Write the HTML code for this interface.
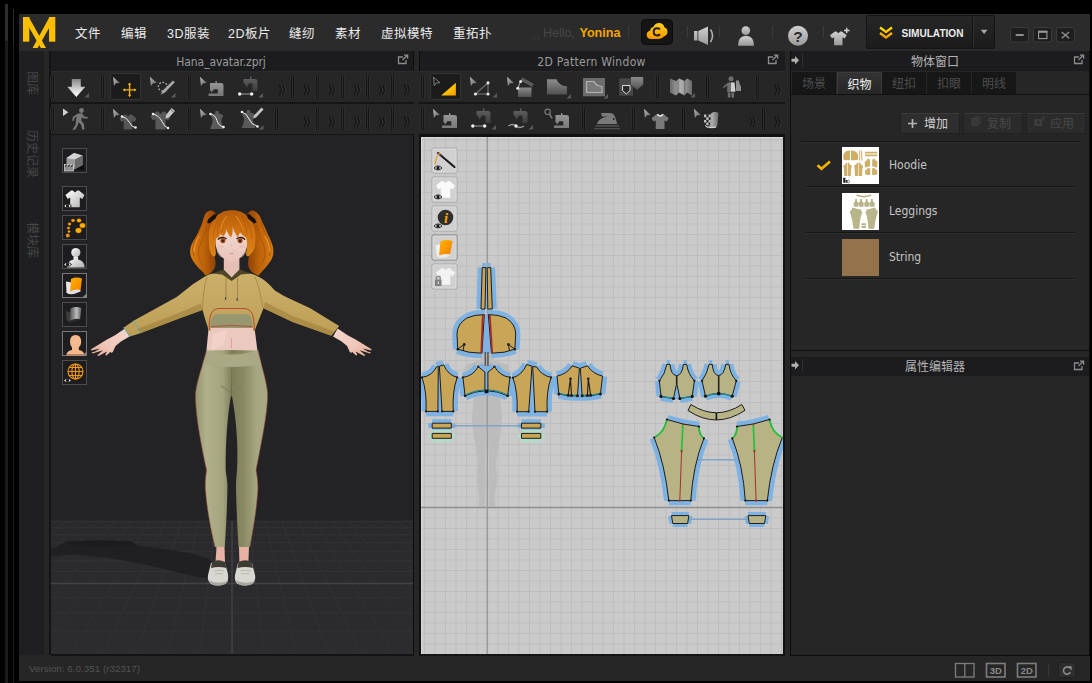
<!DOCTYPE html>
<html lang="zh">
<head>
<meta charset="utf-8">
<title>Marvelous Designer</title>
<style>
*{box-sizing:border-box;margin:0;padding:0}
html,body{width:1092px;height:683px;overflow:hidden;background:#000}
body{position:relative;font-family:"Liberation Sans","Noto Sans CJK SC",sans-serif;color:#ddd;font-size:12px}
.abs{position:absolute}
#app{position:absolute;left:19px;top:14px;width:1071px;height:667px;background:#262626}
/* outside strips */
.strip{position:absolute;background:#222}
/* menubar */
#menubar{position:absolute;left:19px;top:14px;width:1071px;height:37px;background:#2b2b2b}
.menu{position:absolute;top:24.500px;height:18px;line-height:18px;font-size:12.500px;color:#ececec;white-space:nowrap;letter-spacing:.5px}
/* titles */
.title{position:absolute;background:#1c1c1e;color:#9a9a9a;font-size:12px;text-align:center;white-space:nowrap;font-family:"DejaVu Sans Condensed","DejaVu Sans","Noto Sans CJK SC",sans-serif}
.toolrow{position:absolute;background:#262626}
.hline{position:absolute;background:#151515;height:1px}
.vline{position:absolute;background:#151515;width:1px}
.sep{position:absolute;width:3px;height:23px;border-left:1px solid #161616;border-right:1px solid #161616}
.chev{position:absolute;color:#3a3a3a;font-size:15px;line-height:16px;width:12px;text-align:center;font-family:"DejaVu Sans",sans-serif}
#sidebar{position:absolute;left:19px;top:51px;width:25px;height:604px;background:#1f1f21}
.vtext{position:absolute;left:42px;height:20px;transform-origin:0 0;transform:rotate(90deg);font-size:12px;color:#464648;white-space:nowrap;line-height:20px}
#view3d{position:absolute;left:51px;top:135px;width:362px;height:519px;background:#232325;overflow:hidden}
#view2d{position:absolute;left:421px;top:137px;width:362px;height:517px;background:#cbcbcb;overflow:hidden}
#status{position:absolute;left:19px;top:656px;width:1071px;height:25px;background:#262626}
.vbtn{position:absolute;width:24px;height:24px;border:1px solid #555;background:#1d1d1f}
.vbtn2{position:absolute;width:26px;height:26px;border:1px solid #8a8a8a;background:#dcdcdc}
.tab{position:absolute;top:72px;width:45px;height:22px;line-height:24px;text-align:center;font-size:12px;color:#4e4e4e;background:#171717;border-right:1px solid #262626}
.tab.on{color:#f0f0f0;background:linear-gradient(#333,#262626);border:1px solid #3c3c3c;border-bottom:none}
.pbtn{position:absolute;top:113px;height:21px;background:#2e2e2e;border:1px solid #202020;border-top-color:#3a3a3a;font-size:12px;line-height:21px;color:#d0d0d0;white-space:nowrap}
.pbtn.dis{color:#484848;background:#2b2b2b}
.rowsep{position:absolute;left:806px;width:270px;height:2px;background:linear-gradient(#151515 50%,#303030 50%)}
.thumb{position:absolute;left:842px;width:37px;height:37px;background:#fff;overflow:hidden}
.rname{position:absolute;left:889px;font-size:12px;color:#c4c4c4;font-family:"DejaVu Sans Condensed","DejaVu Sans",sans-serif;line-height:16px}
</style>
</head>
<body>
<!-- outer faint strips on the black desktop -->
<div class="strip" style="left:5px;top:4px;width:3px;height:679px;background:#1b1b1b"></div>
<div class="strip" style="left:5px;top:4px;width:3px;height:37px;background:#2c2c2c"></div>
<div class="strip" style="left:13px;top:9px;width:1px;height:674px;background:#1e1e1e"></div>
<div class="strip" style="left:13px;top:9px;width:1px;height:36px;background:#2c2c2c"></div>

<div id="app"></div>
<div id="menubar"></div>

<!-- LOGO -->
<svg class="abs" style="left:19px;top:14px" width="44" height="37" viewBox="0 0 44 37">
  <g fill="#fbbf00"><rect x="4" y="3" width="6.300" height="24.700"/><rect x="30" y="3" width="6.300" height="24.700"/><polygon points="4,3 9.800,3 27,34 21.900,34"/><polygon points="36.300,3 30.500,3 13.600,34 18.700,34"/></g>
</svg>

<!-- MENUS -->
<div class="menu" style="left:75px">文件</div>
<div class="menu" style="left:121px">编辑</div>
<div class="menu" style="left:167px">3D服装</div>
<div class="menu" style="left:228px">2D板片</div>
<div class="menu" style="left:289px">缝纫</div>
<div class="menu" style="left:335px">素材</div>
<div class="menu" style="left:381px">虚拟模特</div>
<div class="menu" style="left:453px">重拓扑</div>

<div class="abs" style="left:543px;top:25px;height:16px;line-height:16px;font-size:12.500px;color:#474747;white-space:nowrap">Hello, <b style="color:#f5a500;font-size:12.600px;margin-left:1px">Yonina</b></div>

<!-- SIDEBAR -->
<div id="sidebar"></div>
<div class="abs" style="left:44px;top:51px;width:5px;height:604px;background:#262626"></div>
<div class="abs" style="left:49px;top:51px;width:2px;height:604px;background:#141414"></div>
<div class="vtext" style="top:71px">图库</div>
<div class="vtext" style="top:130px">历史记录</div>
<div class="vtext" style="top:221.500px">模块库</div>

<!-- 3D WINDOW -->
<div class="title" style="left:51px;top:51px;width:362px;height:20px;line-height:22px"><span style="position:relative;left:-11px;letter-spacing:-.08px">Hana_avatar.zprj</span></div>
<div class="toolrow" id="t3a" style="left:51px;top:72px;width:363px;height:30px"></div>
<div class="toolrow" id="t3b" style="left:51px;top:104px;width:363px;height:30px"></div>
<div class="hline" style="left:51px;top:71px;width:363px;background:#2c2c2c"></div>
<div class="hline" style="left:51px;top:102px;width:363px;height:2px"></div>
<div class="hline" style="left:51px;top:134px;width:363px"></div>
<div id="view3d">
<svg class="abs" style="left:0;top:0" width="363" height="520" viewBox="51 135 363 520">
<defs>
  <linearGradient id="flr" x1="0" y1="0" x2="0" y2="1"><stop offset="0" stop-color="#29292c"/><stop offset="0.3" stop-color="#2b2b2e"/><stop offset="1" stop-color="#2c2c2f"/></linearGradient>
  <linearGradient id="hairg" x1="0" y1="0" x2="0" y2="1"><stop offset="0" stop-color="#b85c0a"/><stop offset="0.5" stop-color="#d07412"/><stop offset="1" stop-color="#dc8418"/></linearGradient>
  <linearGradient id="tailL" x1="0" y1="0" x2="1" y2="0"><stop offset="0" stop-color="#d87c12"/><stop offset="0.55" stop-color="#bc620a"/><stop offset="1" stop-color="#8e4206"/></linearGradient>
  <linearGradient id="tailR" x1="1" y1="0" x2="0" y2="0"><stop offset="0" stop-color="#d87c12"/><stop offset="0.55" stop-color="#bc620a"/><stop offset="1" stop-color="#8e4206"/></linearGradient>
  <linearGradient id="hood" x1="0" y1="0" x2="0" y2="1"><stop offset="0" stop-color="#ccb06a"/><stop offset="1" stop-color="#bd9e56"/></linearGradient>
  <linearGradient id="legL" x1="0" y1="0" x2="1" y2="0"><stop offset="0" stop-color="#96976f"/><stop offset="0.3" stop-color="#b0b18b"/><stop offset="0.75" stop-color="#a3a47e"/><stop offset="1" stop-color="#7e7e5a"/></linearGradient>
  <linearGradient id="legR" x1="0" y1="0" x2="1" y2="0"><stop offset="0" stop-color="#7c7c59"/><stop offset="0.35" stop-color="#8a8a64"/><stop offset="0.7" stop-color="#a6a781"/><stop offset="1" stop-color="#a9aa84"/></linearGradient>
  <linearGradient id="skin" x1="0" y1="0" x2="0" y2="1"><stop offset="0" stop-color="#f3dcd6"/><stop offset="1" stop-color="#e9c3b8"/></linearGradient>
  <radialGradient id="shad" cx="0.5" cy="0.5" r="0.5"><stop offset="0" stop-color="#19191b"/><stop offset="0.7" stop-color="#1b1b1d" stop-opacity=".95"/><stop offset="1" stop-color="#1e1e20" stop-opacity="0"/></radialGradient>
</defs>
<!-- floor -->
<rect x="51" y="520.500" width="363" height="135" fill="url(#flr)"/>
<path d="M51 521.4H414M51 527.9H414M51 534.9H414M51 542.7H414M51 551.3H414M51 560.9H414M51 571.6H414M51 597.4H414M51 613.0H414M51 631.1H414M51 652.2H414" stroke="#333336" stroke-width="1" fill="none"/>
<path d="M65.9 521.0L51.0 533.7M82.5 521.0L51.0 550.7M99.1 521.0L51.0 572.1M115.7 521.0L51.0 599.5M132.3 521.0L51.0 636.1M149.0 521.0L70.0 655.0M165.6 521.0L102.4 655.0M182.2 521.0L134.8 655.0M198.8 521.0L167.2 655.0M215.4 521.0L199.6 655.0M248.6 521.0L264.4 655.0M265.2 521.0L296.8 655.0M281.8 521.0L329.2 655.0M298.4 521.0L361.6 655.0M315.0 521.0L394.0 655.0M331.7 521.0L414.0 637.5M348.3 521.0L414.0 600.7M364.9 521.0L414.0 573.1M381.5 521.0L414.0 551.7M398.1 521.0L414.0 534.5" stroke="#323235" stroke-width="1" fill="none"/>
<path d="M51 583.500H414" stroke="#434346" stroke-width="1.300"/>
<path d="M232 521V655" stroke="#4a4a4d" stroke-width="1.100"/>
<!-- shadow -->
<path d="M51 549L58 546L66 541.500L100 540.500L132 541.500L137 545.500L160 548.500L190 553L207 558L214 563L214 579L200 577.500L172 571L145 564.500L110 558L75 554.500L51 556.500Z" fill="#202023"/>
<path d="M66 541.500L100 540.500L132 541.500L137 545.500L100 546L70 545.500Z" fill="#1c1c1f"/>
<!-- pigtails -->
<path d="M210.600 210.500C207 211 205 213.500 204.400 216C203 220 202 224 200.800 227C199 231 197 235 195.200 238C192.500 242 190.500 246 190.300 249.200C190 252 190.200 254.500 190.900 256.600C192 259.500 193.500 262 195.200 264C197 266.500 199.500 269 202 271.300L205.700 275.600C208.500 274.500 211 273 212.400 271.300C214.500 269 215.500 266.500 215.500 264C215.600 262 215.300 260 214.900 257.800L216 230L216 214C214.500 211.500 212.500 210.300 210.600 210.500Z" fill="url(#tailL)"/>
<path d="M252.400 210.500C256 211 258 213.500 259.800 216C261.500 220 263 224 264.700 227C266.500 231 268 235 269.600 238C271.500 242 273 246 273.300 249.200C273.500 252 273.300 254.500 272.700 256.600C271.800 259.500 270.200 262 268.400 264C266.500 266.500 264.500 269 262.300 271.300L258.600 275.600C255.500 274.500 253 273 251.200 271.300C249 269 248.200 266.500 248.100 264C248 262 248.300 260 248.700 257.800L247.500 230L247.500 214C249 211.500 250.500 210.300 252.400 210.500Z" fill="url(#tailR)"/>
<path d="M203 222q-5 12-9 20q-3 8 0 14M207 226q-4 12-8 22q-2 8 3 17M211 250q-2 10 0 20" stroke="#9c4a06" stroke-width=".9" fill="none" opacity=".7"/>
<path d="M260.500 222q5 12 9 20q3 8 0 14M256.500 226q4 12 8 22q2 8-3 17M252.500 250q2 10 0 20" stroke="#9c4a06" stroke-width=".9" fill="none" opacity=".7"/>
<path d="M199 236q-5 9-5 16" stroke="#ee9a2a" stroke-width="1.400" fill="none" opacity=".8"/><path d="M265 236q5 9 5 16" stroke="#ee9a2a" stroke-width="1.400" fill="none" opacity=".8"/>
<!-- neck -->
<path d="M223.800 255h15.600v15l-7.800 8l-7.800-8z" fill="#e6bfb4"/>
<!-- face -->
<path d="M215.300 238C214.500 228 221 222 231.500 222C242 222 248.500 228 247.700 238C248 246 246 252 241 257C237 260.500 234 262 231.500 262.500C229 262 226 260.500 222 257C217 252 215 246 215.300 238Z" fill="url(#skin)"/>
<path d="M216 244q2 8 8 14q-4 0-7-6zM247 244q-2 8-8 14q4 0 7-6z" fill="#e8c5bc" opacity=".6"/>
<!-- eyes -->
<ellipse cx="222.900" cy="240.600" rx="2.500" ry="2.700" fill="#9a4a12"/><ellipse cx="240.100" cy="240.600" rx="2.500" ry="2.700" fill="#9a4a12"/>
<circle cx="222.900" cy="240.800" r="1.100" fill="#3a1806"/><circle cx="240.100" cy="240.800" r="1.100" fill="#3a1806"/>
<path d="M218 239.600q1-1.600 3.200-2.100q3-.6 5.300 1.500M245 239.600q-1-1.600-3.200-2.100q-3-.6-5.300 1.500" stroke="#2a1a14" stroke-width="1.400" fill="none"/>
<ellipse cx="221" cy="246.500" rx="3" ry="1.600" fill="#eeb4ac" opacity=".5"/><ellipse cx="242" cy="246.500" rx="3" ry="1.600" fill="#eeb4ac" opacity=".5"/>
<path d="M229.700 253.400q1.800.6 3.600 0" stroke="#c98a84" stroke-width=".9" fill="none"/>
<path d="M231.800 244l-.8 3.500" stroke="#e0b4aa" stroke-width=".8"/>
<!-- hair cap + bangs -->
<path d="M212.400 256C209.500 252 208.600 246 208.800 237C208.500 221 218 210.300 232 210.300C246 210.300 255.800 221 255.500 237C255.700 246 254.500 252 248.700 256C246.500 257 245.800 255 246.300 252C247.500 247 247.200 242 246.300 238L243.500 236L240 232.500L237.700 237.500Q234 232 232.500 226.500Q233.500 233 231 237.500Q227 233 226.500 229Q226 234 223.500 236.500L220.500 234L218.500 237.500L216.500 238C215.300 242 215 247 215.800 252C216.200 255 215 257.500 212.400 256Z" fill="url(#hairg)"/>
<path d="M232 211q-9 6-10 21M232 211q9 7 10 21M226 212q-8 8-9 24M238 212q9 8 9 24M221 215q-7 9-8 24M243 215q8 9 9 24" stroke="#b05408" stroke-width=".8" fill="none" opacity=".7"/>
<path d="M227 216q-5 6-6 14M236 216q5 6 7 15" stroke="#f0a030" stroke-width="1.200" fill="none" opacity=".55"/>
<!-- ribbons -->
<path d="M207 222.500L208.500 219L214.500 214L217 215L215.500 218.500L209.500 223.500Z" fill="#15100c"/><path d="M256.500 222.500L255 219L249 214L246.500 215L248 218.500L254 223.500Z" fill="#15100c"/>
<!-- midriff skin -->
<path d="M209 324h45l4 31h-52z" fill="#ecc9be"/>
<path d="M213 334l14-4l-4 16l-12 4z" fill="#f2d6cd" opacity=".7"/>
<path d="M231.500 338v10" stroke="#d7a497" stroke-width="1"/>
<!-- olive crop band -->
<path d="M210 312h43v16h-43z" fill="#979870"/>
<!-- leggings -->
<path d="M206.600 350.500C203 365 197 380 195.600 393C195 410 200 440 206.600 470C205.500 478 205 484 205.500 490C207 510 211 530 215 547L224.800 547C226 530 227.500 500 227.400 484.600C227 478 226 474 225.700 470C225.500 450 226.500 420 231.400 393L232 350Z" fill="url(#legL)"/>
<path d="M258 350.500C261 365 266.500 380 267.500 393C268 410 262 440 256 470C257.500 478 258 484 257.800 490C256.500 510 253 530 249.800 547L238.500 547C237.500 530 236 500 236 484.600C236.200 478 236.800 474 237 470C238 450 237.500 425 231.400 393L231 350Z" fill="url(#legR)"/>
<path d="M206.600 350.500Q219 354.500 232 354.500T258 350.500L261.500 364.500Q247 367 232 367T202.500 364.500Z" fill="#a9aa85"/>
<path d="M221 386q8 4 10.400 9q3-5 11-9" stroke="#7f8258" stroke-width="1.600" fill="none" opacity=".7"/>
<!-- ankles -->
<path d="M216.500 547h8l.5 15h-9.500z" fill="#e7b1a3"/><path d="M239 547h10l-.6 15h-9z" fill="#e7b1a3"/>
<!-- shoes -->
<path d="M211 563q5-3 14 0l3 11q1 8-3 10q-7 3-14 0q-4-3-3-9z" fill="#d9d7d1"/>
<path d="M238 563q8-3 14 0l3 12q1 6-3 9q-7 3-14 0q-4-2-3-9z" fill="#d9d7d1"/>
<path d="M212 562q6-3.500 13 0l1.500 6q-7.500-2-15.500 0z" fill="#3d3c32"/><path d="M238.500 562q7-3.500 13 0l1.500 6q-8-2-15.500 0z" fill="#3d3c32"/>
<path d="M214 571q5-1.500 10 0M215 574q4-1 8 0M240.500 571q5-1.500 10 0M241.500 574q4-1 8 0" stroke="#b4b2ab" stroke-width=".9" fill="none"/>
<path d="M208.500 580q8 5 19.500 1q-2 4-9.500 4.500t-10-5.500z" fill="#a9a7a0"/><path d="M235.500 580q8 5 19.500 1q-2 4-9.500 4.500t-10-5.500z" fill="#a9a7a0"/>
<!-- hands -->
<linearGradient id="handL" x1="1" y1="0" x2="0" y2="1"><stop offset="0" stop-color="#f3d6cc"/><stop offset="0.6" stop-color="#efc7ba"/><stop offset="1" stop-color="#e6a892"/></linearGradient>
<linearGradient id="handR" x1="0" y1="0" x2="1" y2="1"><stop offset="0" stop-color="#f3d6cc"/><stop offset="0.6" stop-color="#efc7ba"/><stop offset="1" stop-color="#e6a892"/></linearGradient>
<polygon points="125.0,328.5 115.0,335.2 107.0,339.5 98.0,345.0 91.0,349.2 91.4,350.6 100.0,348.6 95.0,351.5 91.6,352.6 92.6,353.6 103.0,350.2 97.2,355.3 98.6,356.0 107.0,351.6 105.2,355.0 106.6,355.6 110.5,351.8 111.4,353.0 112.8,352.0 115.5,346.0 121.0,341.5 129.5,336.5" fill="url(#handL)"/>
<polygon points="337.6,328.5 347.6,335.2 355.6,339.5 364.6,345.0 371.6,349.2 371.2,350.6 362.6,348.6 367.6,351.5 371.0,352.6 370.0,353.6 359.6,350.2 365.4,355.3 364.0,356.0 355.6,351.6 357.4,355.0 356.0,355.6 352.1,351.8 351.2,353.0 349.8,352.0 347.1,346.0 341.6,341.5 333.1,336.5" fill="url(#handR)"/>
<!-- hoodie -->
<path d="M222 272.500L213 273.500Q209 274 205 276.500L192.800 284.200L176.700 297L134 320.400L123.500 327.700L130 336.500L140.400 333.300L176.700 319.600L202.500 310L206 322L209 331L210.700 331Q210.200 320 213 316Q214.500 314 218 314L245 314Q248.500 314 250.300 316Q253 320 252.800 331L254.600 331L258 322L263.500 308.300L292.500 322L331.200 335.700L339.200 326L310.200 308.300L284.500 296.300L274.800 290.600Q266 280 258 276.500Q254 274 250 273.500L241 272.500L231.500 280Z" fill="url(#hood)"/>
<!-- hood collar -->
<path d="M212.500 273.500L223.500 269.500L231.600 277.500L239.500 269.500L250.500 273.500L241 274.500L231.600 281L222 274.500Z" fill="#4e4626"/>
<!-- hoodie shading -->
<path d="M202.500 310L176.700 319.600L140.400 333.300L137 329L176 314L201 303.500Z" fill="#9a7b39" opacity=".55"/>
<path d="M263.500 308.300L292.500 322L331.200 335.700L334 331.500L293 316L265 302Z" fill="#9a7b39" opacity=".55"/>
<path d="M207 277q-4 12-4.500 33M255 277q5 12 8 31" stroke="#a3843f" stroke-width="1" fill="none" opacity=".8"/>
<!-- red seam lines -->
<path d="M209.300 330Q208.800 316 212.500 311.500Q214.500 308.500 219 308.500L244 308.500Q248.500 308.500 250.800 311.500Q254.500 316 254.300 330" fill="none" stroke="#b2402e" stroke-width=".9"/>
<path d="M211 326.500q20-2 41 0" fill="none" stroke="#b2402e" stroke-width=".8"/>
<path d="M226 278v19M237.500 278v20" stroke="#8d7440" stroke-width=".7"/>
<path d="M225.600 297v3M237.200 298v3" stroke="#4a4a48" stroke-width="1.200"/>
<path d="M123.500 327.500l6.500 9M134 320.500l6.500 12.500" stroke="#47b4c8" stroke-width=".8" fill="none"/>
<path d="M206.600 350.500C203 365 197 380 195.600 393C195 410 200 440 206.600 470C205.500 478 205 484 205.500 490C207 510 211 530 215 547M258 350.500C261 365 266.500 380 267.500 393C268 410 262 440 256 470C257.500 478 258 484 257.800 490C256.500 510 253 530 249.800 547" stroke="#a5503e" stroke-width=".7" fill="none" opacity=".8"/>
</svg>
</div>

<!-- gap between windows -->
<div class="abs" style="left:413px;top:51px;width:1px;height:20px;background:#0e0e0e"></div>
<div class="abs" style="left:413px;top:134px;width:1px;height:522px;background:#0e0e0e"></div>
<div class="abs" style="left:51px;top:654px;width:363px;height:2px;background:#141414"></div>
<div class="abs" style="left:414px;top:51px;width:5px;height:605px;background:#262626"></div>
<div class="abs" style="left:419px;top:51px;width:1px;height:20px;background:#0e0e0e"></div>
<div class="abs" style="left:419px;top:134px;width:2px;height:522px;background:#111"></div>
<div class="abs" style="left:419px;top:654px;width:366px;height:2px;background:#141414"></div>
<div class="abs" style="left:783px;top:134px;width:2px;height:522px;background:#111"></div>

<!-- 2D WINDOW -->
<div class="title" style="left:420px;top:51px;width:365px;height:20px;line-height:22px"><span style="position:relative;left:-11px;letter-spacing:.3px">2D Pattern Window</span></div>
<div class="toolrow" id="t2a" style="left:419px;top:72px;width:366px;height:30px"></div>
<div class="toolrow" id="t2b" style="left:419px;top:104px;width:366px;height:30px"></div>
<div class="hline" style="left:420px;top:71px;width:365px;background:#2c2c2c"></div>
<div class="hline" style="left:419px;top:102px;width:366px;height:2px"></div>
<div class="hline" style="left:419px;top:134px;width:366px;height:3px;background:#111"></div>
<div id="view2d">
<svg class="abs" style="left:0;top:0" width="363" height="518" viewBox="421 137 363 518">
<defs>
  <pattern id="grid" x="487" y="507" width="10.5" height="10.5" patternUnits="userSpaceOnUse"><path d="M0.5 0V10.5M0 0.500H10.500" stroke="#bebebe" stroke-width="1" fill="none"/></pattern>
</defs>
<rect x="421" y="137" width="363" height="518" fill="#cacaca"/>
<rect x="421" y="137" width="363" height="518" fill="url(#grid)"/>
<path d="M421 137.500H784M421.500 137V655" stroke="#dadada" stroke-width="1"/>
<!-- avatar silhouette -->
<g fill="#bcbcbc">
  <path d="M481 352h12l1 8l14 5l3 10l-8 2l-3 18l2 21.500C501.500 430 499 442 498 450C497 456 496 461 496 466C496.500 471 497 476 497 480C496.500 487 495 493 494.500 498L495.500 506.500H489L489 498C488.800 492 488.500 486 488.500 480C488.700 475 489 470 489 466C488.800 452 488.400 440 488 428H486C485.600 440 485.200 452 485 466C485 470 485.300 475 485.500 480C485.500 486 485.200 492 485 498L485 506.500H478.500L479.500 498C479 493 477.500 487 477 480C477 476 477.500 471 478 466C478 461 477 456 476 450C475 442 472.500 430 472 416.500L474 395l-3-18l-8-2l3-10l14-5z"/>
</g>
<path d="M421 507.500H784" stroke="#8e8e8e" stroke-width="1.300"/>
<path d="M487.300 137V655" stroke="#9a9a9a" stroke-width="1.500"/>
<!-- halos -->
<g fill="#7db2e2" stroke="#7db2e2" stroke-width="9.5" stroke-linejoin="bevel" stroke-linecap="butt">
  <path d="M482.200 267.600h3.700l-.9 41.400h-4zM487.200 267.600h3.500l1.600 41.400h-4.500z" stroke="none"/>
  <path d="M482.2 267.6L485.9 267.6M485.9 267.6L485 309M485 309L481 309M481 309L482.2 267.6M487.2 267.6L490.7 267.6M490.7 267.6L492.3 309M492.3 309L487.8 309M487.8 309L487.2 267.6" fill="none" stroke-width="9"/>
  <path d="M484.300 314.600Q474 314.600 467 318Q457 324 457 334L457.700 349.200Q468 353.200 481.900 353.200ZM488.300 314.600Q499 314.600 506 318Q515.700 324 515.700 334L514.900 349.200Q505 353.200 491.500 353.200Z" stroke="none"/>
  <path d="M484.3 314.6Q474 314.6 467 318M467 318Q457 324 457 334M457 334L457.7 349.2M457.7 349.2Q468 353.2 481.9 353.2M481.9 353.2L484.3 314.6M488.3 314.6Q499 314.6 506 318M506 318Q515.7 324 515.7 334M515.7 334L514.9 349.2M514.9 349.2Q505 353.2 491.5 353.2M491.5 353.2L488.3 314.6" fill="none"/>
  <path d="M422 377.400Q432 376 436.800 366.600L443.700 364.900Q448 375 457.200 377.400Q452 392 453.300 411.400L426 411.400Q427 392 422 377.400Z" stroke="none"/>
  <path d="M422 377.4Q432 376 436.8 366.6M436.8 366.6L443.7 364.9M443.7 364.9Q448 375 457.2 377.4M457.2 377.4Q452 392 453.3 411.4M453.3 411.4L426 411.4M426 411.4Q427 392 422 377.4" fill="none"/>
  <path d="M462.900 377.400Q473 376 478.300 366.600Q482 370 484.900 372.100L487.900 372.100Q491 370 494.500 366.600Q500 376 509.900 377.400L507.700 395.800Q498 391 486.500 390.800Q475 391 465.100 395.800Z" stroke="none"/>
  <path d="M462.9 377.4Q473 376 478.3 366.6M478.3 366.6Q482 370 484.9 372.1M484.9 372.1L487.9 372.1M487.9 372.1Q491 370 494.5 366.6M494.5 366.6Q500 376 509.9 377.4M509.9 377.4L507.7 395.8M507.7 395.8Q498 391 486.5 390.8M486.5 390.8Q475 391 465.1 395.8M465.1 395.8L462.9 377.4" fill="none"/>
  <path d="M512.900 377.700Q522 375 526.700 364.500L536.600 366.900Q541 375 551.100 377.400Q546 392 547.200 411.700L517.100 411.700Q518 392 512.900 377.700Z" stroke="none"/>
  <path d="M512.9 377.7Q522 375 526.7 364.5M526.7 364.5L536.6 366.9M536.6 366.9Q541 375 551.1 377.4M551.1 377.4Q546 392 547.2 411.7M547.2 411.7L517.1 411.7M517.1 411.7Q518 392 512.9 377.7" fill="none"/>
  <path d="M557 376.100Q567 374 572.200 365.800L579.900 368.200L587.300 365.800Q593 374 602.500 376.100L600.500 393.900Q590 396.500 579.800 395.800Q569 396.500 558.800 393.900Z" stroke="none"/>
  <path d="M557 376.1Q567 374 572.2 365.8M572.2 365.8L579.9 368.2M579.9 368.2L587.3 365.8M587.3 365.8Q593 374 602.5 376.1M602.5 376.1L600.5 393.9M600.5 393.9Q590 396.5 579.8 395.8M579.8 395.8Q569 396.5 558.8 393.9M558.8 393.9L557 376.1" fill="none"/>
  <path d="M432.200 423.200h19.100v4.900h-19.100zM521.500 423.200h19.300v4.900h-19.300z" stroke="none"/>
  <path d="M432.2 423.2L451.3 423.2M451.3 423.2L451.3 428.1M451.3 428.1L432.2 428.1M432.2 428.1L432.2 423.2M521.5 423.2L540.8 423.2M540.8 423.2L540.8 428.1M540.8 428.1L521.5 428.1M521.5 428.1L521.5 423.2" fill="none" stroke-width="8"/>
  <path d="M432.200 433.400h19.100v4.900h-19.100zM521.500 433.400h19.300v4.900h-19.300z" stroke="none" fill="#b2dcc8"/>
  <path d="M432.2 433.4L451.3 433.4M451.3 433.4L451.3 438.3M451.3 438.3L432.2 438.3M432.2 438.3L432.2 433.4M521.5 433.4L540.8 433.4M540.8 433.4L540.8 438.3M540.8 438.3L521.5 438.3M521.5 438.3L521.5 433.4" fill="none" stroke-width="8" stroke="#b2dcc8"/>
  <!-- crop tops -->
  <path d="M666.800 364.400h3.200Q671 375 676.700 375.600Q682 375 683.500 364.400h3.200Q688 374 694.400 380.800L692.200 396.400L679.900 398.500L676.700 385L673.500 398.500L661 396.400L659.400 380.800Q665 374 666.800 364.400Z" stroke="none"/>
  <path d="M666.8 364.4L670 364.4M670 364.4Q671 375 676.7 375.6M676.7 375.6Q682 375 683.5 364.4M683.5 364.4L686.7 364.4M686.7 364.4Q688 374 694.4 380.8M694.4 380.8L692.2 396.4M692.2 396.4L679.9 398.5M679.9 398.5L676.7 385M676.7 385L673.5 398.5M673.5 398.5L661 396.4M661 396.4L659.4 380.8M659.4 380.8Q665 374 666.8 364.4" fill="none" stroke-width="9"/>
  <path d="M709.100 364.400h3.200Q713 375 718.700 375.600Q724 375 725.800 364.400h3.200Q730 374 736.300 380.800L732.200 396.200Q725 393.500 718.700 393.600Q712 393.500 705.500 396.200L702 380.800Q707 374 709.100 364.400Z" stroke="none"/>
  <path d="M709.1 364.4L712.3 364.4M712.3 364.4Q713 375 718.7 375.6M718.7 375.6Q724 375 725.8 364.4M725.8 364.4L729 364.4M729 364.4Q730 374 736.3 380.8M736.3 380.8L732.2 396.2M732.2 396.2Q725 393.5 718.7 393.6M718.7 393.6Q712 393.5 705.5 396.2M705.5 396.2L702 380.8M702 380.8Q707 374 709.1 364.4" fill="none" stroke-width="9"/>
  <!-- legs -->
  <path d="M667 419.500Q683 425 699 426.500Q699 435 703.900 438.400Q693 465 690.800 500.600L668.800 500.600Q665 465 654.200 437.500Q664 433 667 419.500Z" stroke="none"/>
  <path d="M667 419.5Q683 425 699 426.5M703.9 438.4Q693 465 690.8 500.6M690.8 500.6L668.8 500.6M668.8 500.6Q665 465 654.2 437.5" fill="none"/>
  <path d="M769.500 419.500Q753 425 737 426.500Q737 435 732.300 438.400Q743 465 745.300 500.600L767.300 500.600Q771 465 782.300 437.500Q772 433 769.500 419.500Z" stroke="none"/>
  <path d="M769.5 419.5Q753 425 737 426.5M732.3 438.4Q743 465 745.3 500.6M745.3 500.6L767.3 500.6M767.3 500.6Q771 465 782.3 437.5" fill="none"/>
  <path d="M671.500 515.600h17.400l-1.300 7.900h-14.800zM748 515.600h17.800l-1.300 7.900h-15.200z" stroke="none"/>
  <path d="M671.5 515.6L688.9 515.6M688.9 515.6L687.6 523.5M687.6 523.5L672.8 523.5M672.8 523.5L671.5 515.6M748 515.6L765.8 515.6M765.8 515.6L764.5 523.5M764.5 523.5L749.3 523.5M749.3 523.5L748 515.6" fill="none" stroke-width="7"/>
</g>
<!-- connector lines -->
<path d="M451 425.800H521.500M697 459.800H737M689 519.300H748" stroke="#7aa2c8" stroke-width="1.400" opacity=".9"/>
<path d="M485.200 352v14M488 352v14" stroke="#4a4a4a" stroke-width="1.300"/>
<!-- mustard pieces -->
<g fill="#c9a558" stroke="#1d1d1d" stroke-width="1" stroke-linejoin="round">
  <path d="M482.200 267.600h3.700l-.9 41.400h-4zM487.200 267.600h3.500l1.600 41.400h-4.500z"/>
  <path d="M484.300 314.600Q474 314.600 467 318Q457 324 457 334L457.700 349.200Q468 353.200 481.900 353.200ZM488.300 314.600Q499 314.600 506 318Q515.700 324 515.700 334L514.900 349.200Q505 353.200 491.500 353.200Z"/>
  <path d="M422 377.400Q432 376 436.800 366.600L438.300 366.400L437.900 411.400L426 411.400Q427 392 422 377.400ZM439.400 366.200L443.700 364.900Q448 375 457.200 377.400Q452 392 453.300 411.400L442 411.400Z"/>
  <path d="M462.900 377.400Q473 376 478.300 366.600Q482 370 484.900 372.100L484.900 390.800Q475 391 465.100 395.800ZM509.900 377.400Q500 376 494.500 366.600Q491 370 487.900 372.100L487.900 390.800Q498 391 507.700 395.800Z"/>
  <path d="M512.900 377.700Q522 375 526.700 364.500L532 366.200L528.700 411.700L517.100 411.700Q518 392 512.900 377.700ZM532.700 366.600L536.600 366.900Q541 375 551.100 377.400Q546 392 547.200 411.700L535 411.700Z"/>
  <path d="M557 376.100Q567 374 572.200 365.800L579.400 368.200L577.500 395.800Q568 396.500 558.800 393.900ZM602.500 376.100Q593 374 587.300 365.800L580.400 368.200L582.100 395.800Q591 396.500 600.500 393.900Z"/>
  <path d="M432.200 423.200h19.100v4.900h-19.100zM521.500 423.200h19.300v4.900h-19.300zM432.200 433.400h19.100v4.900h-19.100zM521.500 433.400h19.300v4.900h-19.300z"/>
</g>
<!-- details on mustard -->
<path d="M482.800 315L481.300 353M489.800 315L492.200 353" stroke="#a52a2a" stroke-width="1.800" fill="none"/>
<path d="M464.200 344.400L457.700 349.200M464.200 344.400L463 351M508.400 344.400L514.900 349.200M508.400 344.400L509.500 351" stroke="#1d1d1d" stroke-width="1" fill="none"/>
<path d="M465.100 395.200Q475 390.300 484.900 390.200M507.700 395.200Q498 390.300 487.900 390.200M558.800 393.300Q568 395.900 577.500 395.200M600.500 393.300Q591 395.900 582.100 395.200" stroke="#1a8a9a" stroke-width="1.300" fill="none"/>
<path d="M570.500 378.700L568.200 395.200M570.500 378.700L571.500 395.400M588.300 378.700L590.600 395.200M588.300 378.700L587.400 395.400" stroke="#1d1d1d" stroke-width="1.100" fill="none"/>
<rect x="484.600" y="389.600" width="3.800" height="3.600" fill="#111"/>
<g fill="#1d1d1d">
  <circle cx="464.200" cy="344.400" r="1.300"/><circle cx="508.400" cy="344.400" r="1.300"/><circle cx="457.700" cy="349.200" r="1.200"/><circle cx="514.900" cy="349.200" r="1.200"/>
  <circle cx="570.500" cy="378.700" r="1.300"/><circle cx="588.300" cy="378.700" r="1.300"/>
  <circle cx="558.800" cy="393.900" r="1.500"/><circle cx="568.200" cy="395.200" r="1.500"/><circle cx="571.500" cy="395.400" r="1.500"/><circle cx="577.500" cy="395.800" r="1.500"/><circle cx="582.100" cy="395.800" r="1.500"/><circle cx="587.400" cy="395.400" r="1.500"/><circle cx="590.600" cy="395.200" r="1.500"/><circle cx="600.500" cy="393.900" r="1.500"/>
  <circle cx="465.100" cy="395.800" r="1.400"/><circle cx="507.700" cy="395.800" r="1.400"/>
  <circle cx="422" cy="377.400" r="1.100"/><circle cx="457.200" cy="377.400" r="1.100"/><circle cx="426" cy="411.400" r="1.100"/><circle cx="437.900" cy="411.400" r="1.100"/><circle cx="442" cy="411.400" r="1.100"/><circle cx="453.300" cy="411.400" r="1.100"/>
  <circle cx="512.900" cy="377.700" r="1.100"/><circle cx="551.100" cy="377.400" r="1.100"/><circle cx="517.100" cy="411.700" r="1.100"/><circle cx="528.700" cy="411.700" r="1.100"/><circle cx="535" cy="411.700" r="1.100"/><circle cx="547.200" cy="411.700" r="1.100"/>
  <circle cx="462.900" cy="377.400" r="1.100"/><circle cx="509.900" cy="377.400" r="1.100"/><circle cx="478.300" cy="366.600" r="1.100"/><circle cx="494.500" cy="366.600" r="1.100"/>
</g>
<!-- olive pieces -->
<g fill="#b7b384" stroke="#1d1d1d" stroke-width="1" stroke-linejoin="round">
  <path d="M666.800 364.400h3.200Q671 375 676.400 375.600L676.400 384.600L673.500 398.500L661 396.400L659.400 380.800Q665 374 666.800 364.400ZM686.700 364.400h-3.200Q682 375 677 375.600L677 384.600L679.900 398.500L692.200 396.400L694.400 380.800Q688 374 686.700 364.400Z"/>
  <path d="M709.100 364.400h3.200Q713 375 718.700 375.600Q724 375 725.800 364.400h3.200Q730 374 736.300 380.800L732.200 396.200Q725 393.500 718.700 393.600Q712 393.500 705.500 396.200L702 380.800Q707 374 709.100 364.400Z"/>
  <path d="M690.900 404.500Q716.400 421 741.800 404.500L745 410.300Q716.400 429.500 688 410.500Z"/>
  <path d="M667 419.500Q683 425 699 426.500Q699 435 703.900 438.400Q693 465 690.800 500.600L668.800 500.600Q665 465 654.200 437.500Q664 433 667 419.500Z"/>
  <path d="M769.500 419.500Q753 425 737 426.500Q737 435 732.300 438.400Q743 465 745.300 500.600L767.300 500.600Q771 465 782.300 437.500Q772 433 769.500 419.500Z"/>
  <path d="M671.500 515.600h17.400l-1.300 7.900h-14.800zM748 515.600h17.800l-1.300 7.900h-15.200z"/>
</g>
<path d="M718.700 375.600V393.600" stroke="#222" stroke-width="1.600"/>
<path d="M716.400 413V420" stroke="#111" stroke-width="1.600"/>
<path d="M661 396.400L673.500 398.500M679.900 398.500L692.200 396.400M705.500 396.200Q712 393.500 718.700 393.600Q725 393.500 732.200 396.200" stroke="#1a8a9a" stroke-width="1.300" fill="none"/>
<path d="M667 419.500Q664 433 654.200 437.500M699 426.500Q699 435 703.900 438.400M682.900 424.300L681.600 451.200M769.500 419.500Q772 433 782.300 437.500M737 426.500Q737 435 732.300 438.400M753.300 424.300L754.400 451.200" stroke="#22c23c" stroke-width="1.700" fill="none"/>
<path d="M681.600 451.200L679.800 500.600M754.400 451.200L756.100 500.600" stroke="#a03232" stroke-width="1" fill="none"/>
<g fill="#111">
  <circle cx="661" cy="396.400" r="1.600"/><circle cx="673.500" cy="398.500" r="1.600"/><circle cx="679.900" cy="398.500" r="1.600"/><circle cx="692.200" cy="396.400" r="1.600"/>
  <circle cx="705.500" cy="396.200" r="1.600"/><circle cx="718.700" cy="393.600" r="1.900"/><circle cx="732.200" cy="396.200" r="1.600"/>
  <circle cx="659.400" cy="380.800" r="1.100"/><circle cx="694.400" cy="380.800" r="1.100"/><circle cx="702" cy="380.800" r="1.100"/><circle cx="736.300" cy="380.800" r="1.100"/>
  <circle cx="667" cy="419.500" r="1.100"/><circle cx="699" cy="426.500" r="1.100"/><circle cx="703.900" cy="438.400" r="1.100"/><circle cx="654.200" cy="437.500" r="1.100"/><circle cx="668.800" cy="500.600" r="1.100"/><circle cx="690.800" cy="500.600" r="1.100"/>
  <circle cx="769.500" cy="419.500" r="1.100"/><circle cx="737" cy="426.500" r="1.100"/><circle cx="732.300" cy="438.400" r="1.100"/><circle cx="745.300" cy="500.600" r="1.100"/><circle cx="767.300" cy="500.600" r="1.100"/>
</g>
<g fill="#a03232"><circle cx="682.900" cy="424.300" r="1.100"/><circle cx="681.600" cy="451.200" r="1.100"/><circle cx="679.800" cy="500.600" r="1.100"/><circle cx="753.300" cy="424.300" r="1.100"/><circle cx="754.400" cy="451.200" r="1.100"/><circle cx="756.100" cy="500.600" r="1.100"/></g>
</svg>
</div>

<!-- gap to right panel -->
<div class="abs" style="left:785px;top:51px;width:5px;height:605px;background:#262626"></div>
<div class="abs" style="left:790px;top:51px;width:1px;height:605px;background:#0e0e0e"></div>

<!-- RIGHT PANEL -->
<div class="title" style="left:791px;top:51px;width:298px;height:20px;line-height:22px;font-size:12px;color:#b4b4b4"><span style="position:relative;left:-5px">物体窗口</span></div>
<div class="abs" style="left:791px;top:72px;width:298px;height:23px;background:#262626"></div>
<div class="tab" style="left:792px">场景</div>
<div class="tab on" style="left:837px">织物</div>
<div class="tab" style="left:882px">纽扣</div>
<div class="tab" style="left:927px">扣眼</div>
<div class="tab" style="left:972px">明线</div>
<div class="hline" style="left:791px;top:94px;width:298px;background:#111"></div>

<div class="pbtn" style="left:900px;width:60px"><svg class="abs" style="left:6px;top:4px" width="11" height="11" viewBox="0 0 11 11"><path d="M1 5.500h9M5.500 1v9" stroke="#b4b4b4" stroke-width="1.700"/></svg><span class="abs" style="left:23px">增加</span></div>
<div class="pbtn dis" style="left:963px;width:60px"><span class="abs" style="left:23px">复制</span></div>
<div class="pbtn dis" style="left:1026px;width:60px"><span class="abs" style="left:23px">应用</span></div>

<div class="rowsep" style="top:141px;left:801px;width:280px"></div>
<div class="rowsep" style="top:186px"></div>
<div class="rowsep" style="top:232px"></div>
<div class="rowsep" style="top:278px"></div>

<div class="thumb" id="th1" style="top:147px"><svg width="37" height="37" viewBox="0 0 37 37"><g fill="#cfae68">
<path d="M8 3.600q-6.500 0-6.800 5.500l.2 3.600q3 .8 6.600.6zM9 3.600q6.500 0 7.200 5.500l-.2 3.600q-3.500.8-7 .6z"/>
<path d="M17.300 3.600h1l-.2 10h-.9zM19.200 3.600h.9l.3 10h-1.100z"/>
<path d="M23 4.800h12.300v1.700h-12.300zM23 7.600h12.300v1.700h-12.300z"/>
<path d="M1.200 18.500q2-.5 3-2.500l.8-.2v13.200h-2.800q.3-6-1-10.500zM5.600 15.800l1.200-.4q1 2.500 3 3.100q-1.300 4.500-1 10.500h-3.200z"/>
<path d="M12 18.500q2-.5 3-2.500l1-.2v13.200h-3q.3-6-1-10.500zM16.600 15.800l1.200-.4q1 2.500 3.300 3.100q-1.300 4.500-1 10.500h-3.500z"/>
<path d="M22.700 14.500q2-.5 3-3l2.300 1.300v6.800q-2.500 0-5 1.200zM35.500 14.500q-2-.5-3-3l-2.300 1.300v6.800q2.500 0 5 1.200z"/>
<path d="M23 23.500q2-.5 3-2.800l2.200.8v6.300q-2.500.5-5-.3zM35.300 23.500q-2-.5-3-2.800l-2.200.8v6.300q2.500.5 5-.3z"/>
</g><path d="M1.200 30.800h2.200v5h-2.200zM3.800 33h1.500v2.800h-1.500z" fill="#222"/><circle cx="6.300" cy="34.500" r="1.300" fill="none" stroke="#333" stroke-width=".6"/></svg></div>
<div class="thumb" id="th2" style="top:193px"><svg width="37" height="37" viewBox="0 0 37 37"><g fill="#b8b58a">
<path d="M14.800 1.300q7 3 14 0l.6 1.500q-7.500 3.600-15.200 0z"/>
<path d="M13.200 6h1.600l.4 2.600l1.600 1.400l-.4 3.800h-4.400l-.5-3.800l1.500-1.400zM18.200 6h1.600l.4 2.600l1.600 1.400l-.4 3.800h-4.200l-.5-3.800l1.300-1.400zM23.800 6h1.600l.4 2.600l1.600 1.400l-.4 3.800h-4.400l-.5-3.800l1.500-1.400zM29 6h1.600l.4 2.600l1.800 1.400l-.5 3.800h-4.400l-.5-3.800l1.400-1.400z"/>
<path d="M10.500 14.600q4.500 1.500 8.500 1.800q0 1.800 1.300 2.600q-2.600 7-3 16.800h-5.800q-1-9.500-3.800-17.500q2.300-1 2.800-3.700zM33 14.600q-4.500 1.500-8.300 1.800q0 1.800-1.300 2.600q2.600 7 3 16.800h5.800q1-9.500 3.800-17.500q-2.300-1-3-3.700z"/>
<path d="M19.500 30.300h4.600v1.900h-4.600zM19.500 33h4.600v1.900h-4.600z"/>
</g></svg></div>
<div class="thumb" id="th3" style="top:239px;background:#94724c"></div>
<div class="rname" style="top:157px">Hoodie</div>
<div class="rname" style="top:203px">Leggings</div>
<div class="rname" style="top:249px">String</div>
<svg class="abs" style="left:816px;top:160px" width="16" height="11" viewBox="0 0 16 11"><path d="M1.5 5.2l4 3.6L14 1.6" fill="none" stroke="#f5b400" stroke-width="2.6"/></svg>

<div class="hline" style="left:791px;top:350px;width:298px;background:#0e0e0e"></div>
<div class="title" style="left:791px;top:357px;width:298px;height:19px;line-height:21px;font-size:12px;color:#b4b4b4"><span style="position:relative;left:-5px">属性编辑器</span></div>

<!-- right edge -->
<div class="abs" style="left:1089px;top:51px;width:1px;height:605px;background:#0e0e0e"></div>
<div class="abs" style="left:1090px;top:0;width:2px;height:683px;background:#000"></div>

<svg class="abs" id="tbsvg" style="left:0;top:0;pointer-events:none" width="1092" height="683" viewBox="0 0 1092 683">
<defs>
<linearGradient id="curg" x1="0" y1="0" x2="1" y2="1"><stop offset="0" stop-color="#b8b8b8"/><stop offset="1" stop-color="#5e5e5e"/></linearGradient>
<linearGradient id="sewl" x1="0" y1="0" x2="0" y2="1"><stop offset="0" stop-color="#9a9a9a"/><stop offset="1" stop-color="#787878"/></linearGradient>
<linearGradient id="sewd" x1="0" y1="0" x2="0" y2="1"><stop offset="0" stop-color="#646464"/><stop offset="1" stop-color="#3c3c3c"/></linearGradient>
<linearGradient id="arr" x1="0" y1="0" x2="0" y2="1"><stop offset="0" stop-color="#858585"/><stop offset="0.6" stop-color="#d8d8d8"/><stop offset="1" stop-color="#ffffff"/></linearGradient>
<linearGradient id="org" x1="0" y1="0" x2="1" y2="1"><stop offset="0" stop-color="#ffe000"/><stop offset="0.5" stop-color="#ffc400"/><stop offset="1" stop-color="#f59a00"/></linearGradient>
<linearGradient id="gry" x1="0" y1="0" x2="0" y2="1"><stop offset="0" stop-color="#8c8c8c"/><stop offset="1" stop-color="#505050"/></linearGradient>
<linearGradient id="pan" x1="0" y1="0" x2="1" y2="0"><stop offset="0" stop-color="#6a6a6a"/><stop offset="0.5" stop-color="#b0b0b0"/><stop offset="1" stop-color="#6a6a6a"/></linearGradient>
</defs>
<path d="M51.5 76v22M53.5 76v22" stroke="#151515" stroke-width="1"/>
<path d="M52.5 76v22M50.5 76v22M54.5 76v22" stroke="#2c2c2c" stroke-width="1"/>
<path d="M101.5 76v22M103.5 76v22" stroke="#151515" stroke-width="1"/>
<path d="M102.5 76v22M100.5 76v22M104.5 76v22" stroke="#2c2c2c" stroke-width="1"/>
<path d="M188.5 76v22M190.5 76v22" stroke="#151515" stroke-width="1"/>
<path d="M189.5 76v22M187.5 76v22M191.5 76v22" stroke="#2c2c2c" stroke-width="1"/>
<path d="M291.5 76v22M293.5 76v22" stroke="#151515" stroke-width="1"/>
<path d="M292.5 76v22M290.5 76v22M294.5 76v22" stroke="#2c2c2c" stroke-width="1"/>
<path d="M316.5 76v22M318.5 76v22" stroke="#151515" stroke-width="1"/>
<path d="M317.5 76v22M315.5 76v22M319.5 76v22" stroke="#2c2c2c" stroke-width="1"/>
<path d="M341.5 76v22M343.5 76v22" stroke="#151515" stroke-width="1"/>
<path d="M342.5 76v22M340.5 76v22M344.5 76v22" stroke="#2c2c2c" stroke-width="1"/>
<path d="M366.5 76v22M368.5 76v22" stroke="#151515" stroke-width="1"/>
<path d="M367.5 76v22M365.5 76v22M369.5 76v22" stroke="#2c2c2c" stroke-width="1"/>
<path d="M391.5 76v22M393.5 76v22" stroke="#151515" stroke-width="1"/>
<path d="M392.5 76v22M390.5 76v22M394.5 76v22" stroke="#2c2c2c" stroke-width="1"/>
<path d="M280.4 84.8l2.200 5.100l-2.200 5.100M283.5 84.8l2.200 5.100l-2.200 5.100" stroke="#343434" stroke-width="1.100" fill="none"/>
<path d="M279.4 84.8l2.200 5.100l-2.200 5.100M282.5 84.8l2.200 5.100l-2.200 5.100" stroke="#131313" stroke-width="1.200" fill="none"/>
<path d="M305.4 84.8l2.200 5.100l-2.200 5.100M308.5 84.8l2.200 5.100l-2.200 5.100" stroke="#343434" stroke-width="1.100" fill="none"/>
<path d="M304.4 84.8l2.200 5.100l-2.200 5.100M307.5 84.8l2.200 5.100l-2.200 5.100" stroke="#131313" stroke-width="1.200" fill="none"/>
<path d="M330.4 84.8l2.200 5.100l-2.200 5.100M333.5 84.8l2.200 5.100l-2.200 5.100" stroke="#343434" stroke-width="1.100" fill="none"/>
<path d="M329.4 84.8l2.200 5.100l-2.200 5.100M332.5 84.8l2.200 5.100l-2.200 5.100" stroke="#131313" stroke-width="1.200" fill="none"/>
<path d="M355.4 84.8l2.200 5.100l-2.200 5.100M358.5 84.8l2.200 5.100l-2.200 5.100" stroke="#343434" stroke-width="1.100" fill="none"/>
<path d="M354.4 84.8l2.200 5.100l-2.200 5.100M357.5 84.8l2.200 5.100l-2.200 5.100" stroke="#131313" stroke-width="1.200" fill="none"/>
<path d="M380.4 84.8l2.200 5.100l-2.200 5.100M383.5 84.8l2.200 5.100l-2.200 5.100" stroke="#343434" stroke-width="1.100" fill="none"/>
<path d="M379.4 84.8l2.200 5.100l-2.200 5.100M382.5 84.8l2.200 5.100l-2.200 5.100" stroke="#131313" stroke-width="1.200" fill="none"/>
<path d="M405.4 84.8l2.200 5.100l-2.200 5.100M408.5 84.8l2.200 5.100l-2.200 5.100" stroke="#343434" stroke-width="1.100" fill="none"/>
<path d="M404.4 84.8l2.200 5.100l-2.200 5.100M407.5 84.8l2.200 5.100l-2.200 5.100" stroke="#131313" stroke-width="1.200" fill="none"/>
<path d="M71.800 79h9v7.700h4.500l-9 10.300l-9-10.300h4.500z" fill="url(#arr)"/>
<path d="M84.5 97.5h4.500v-4.500z" fill="#5a5a5a"/>
<rect x="110.5" y="73.5" width="30" height="26" rx="1.5" fill="#1b1b1b" stroke="#343434"/>
<path d="M113 76.7l.9 9.400l2.100-2.900l3.900-.2z" fill="url(#curg)"/>
<g stroke="#f5b000" stroke-width="1.400" fill="#f5b000"><path d="M123.800 89.900h11.600M129.600 83.600v12.400" fill="none"/><path d="M129.600 82.400l1.700 2.500h-3.400zM129.600 97.200l1.700-2.500h-3.400zM122.600 89.900l2.500-1.700v3.400zM136.600 89.900l-2.500-1.700v3.400z" stroke="none"/></g>
<path d="M150 76.7l.9 9.400l2.100-2.900l3.900-.2z" fill="url(#curg)"/>
<circle cx="162.800" cy="86.700" r="4.400" fill="none" stroke="#aaa" stroke-width="1.300" stroke-dasharray="1.800 1.500"/>
<path d="M173 80.500l1.800 1.800l-9.600 10l-4.600 2.400l2.400-4.400z" fill="#a8a8a8"/>
<path d="M171 97.5h4.500v-4.500z" fill="#5a5a5a"/>
<path d="M200 76.7l.9 9.400l2.100-2.900l3.900-.2z" fill="url(#curg)"/>
<path d="M210.0 83h5.500v-2h1.300v2h4.200q2.500 0 2.500 2.500v10.500h-15v-2.600h9.300v-4.200h-4.300v1.600h-1.400v1.800h-.9v-1.800h-1.200z" fill="url(#sewl)"/>
<path d="M243.5 79.0h6.500v-2.500h1.300v2.500h3.700q2.500 0 2.500 2.500v9.500h-5v-7.500h-4v2h-1.300v2h-.9v-2h-1.300v-2h-1.500z" fill="url(#sewd)"/>
<path d="M239.7 94H251.7" stroke="#888" stroke-width="1.2"/>
<circle cx="239.7" cy="94" r="1.700" fill="#eee"/><circle cx="251.7" cy="94" r="1.700" fill="#eee"/>
<path d="M258.5 97.5h4.500v-4.500z" fill="#5a5a5a"/>
<path d="M51.5 108v22M53.5 108v22" stroke="#151515" stroke-width="1"/>
<path d="M52.5 108v22M50.5 108v22M54.5 108v22" stroke="#2c2c2c" stroke-width="1"/>
<path d="M101.5 108v22M103.5 108v22" stroke="#151515" stroke-width="1"/>
<path d="M102.5 108v22M100.5 108v22M104.5 108v22" stroke="#2c2c2c" stroke-width="1"/>
<path d="M188.5 108v22M190.5 108v22" stroke="#151515" stroke-width="1"/>
<path d="M189.5 108v22M187.5 108v22M191.5 108v22" stroke="#2c2c2c" stroke-width="1"/>
<path d="M275.5 108v22M277.5 108v22" stroke="#151515" stroke-width="1"/>
<path d="M276.5 108v22M274.5 108v22M278.5 108v22" stroke="#2c2c2c" stroke-width="1"/>
<path d="M316.5 108v22M318.5 108v22" stroke="#151515" stroke-width="1"/>
<path d="M317.5 108v22M315.5 108v22M319.5 108v22" stroke="#2c2c2c" stroke-width="1"/>
<path d="M341.5 108v22M343.5 108v22" stroke="#151515" stroke-width="1"/>
<path d="M342.5 108v22M340.5 108v22M344.5 108v22" stroke="#2c2c2c" stroke-width="1"/>
<path d="M366.5 108v22M368.5 108v22" stroke="#151515" stroke-width="1"/>
<path d="M367.5 108v22M365.5 108v22M369.5 108v22" stroke="#2c2c2c" stroke-width="1"/>
<path d="M391.5 108v22M393.5 108v22" stroke="#151515" stroke-width="1"/>
<path d="M392.5 108v22M390.5 108v22M394.5 108v22" stroke="#2c2c2c" stroke-width="1"/>
<path d="M305.4 116.8l2.200 5.100l-2.200 5.100M308.5 116.8l2.200 5.100l-2.200 5.100" stroke="#343434" stroke-width="1.100" fill="none"/>
<path d="M304.4 116.8l2.200 5.100l-2.200 5.100M307.5 116.8l2.200 5.100l-2.200 5.100" stroke="#131313" stroke-width="1.200" fill="none"/>
<path d="M330.4 116.8l2.200 5.100l-2.200 5.100M333.5 116.8l2.200 5.100l-2.200 5.100" stroke="#343434" stroke-width="1.100" fill="none"/>
<path d="M329.4 116.8l2.200 5.100l-2.200 5.100M332.5 116.8l2.200 5.100l-2.200 5.100" stroke="#131313" stroke-width="1.200" fill="none"/>
<path d="M355.4 116.8l2.200 5.100l-2.200 5.100M358.5 116.8l2.200 5.100l-2.200 5.100" stroke="#343434" stroke-width="1.100" fill="none"/>
<path d="M354.4 116.8l2.200 5.100l-2.200 5.100M357.5 116.8l2.200 5.100l-2.200 5.100" stroke="#131313" stroke-width="1.200" fill="none"/>
<path d="M380.4 116.8l2.200 5.100l-2.200 5.100M383.5 116.8l2.200 5.100l-2.200 5.100" stroke="#343434" stroke-width="1.100" fill="none"/>
<path d="M379.4 116.8l2.200 5.100l-2.200 5.100M382.5 116.8l2.200 5.100l-2.200 5.100" stroke="#131313" stroke-width="1.200" fill="none"/>
<path d="M405.4 116.8l2.200 5.100l-2.200 5.100M408.5 116.8l2.200 5.100l-2.200 5.100" stroke="#343434" stroke-width="1.100" fill="none"/>
<path d="M404.4 116.8l2.200 5.100l-2.200 5.100M407.5 116.8l2.200 5.100l-2.200 5.100" stroke="#131313" stroke-width="1.200" fill="none"/>
<path d="M63 108.600v7.400l5.400-3.700z" fill="#cfcfcf"/>
<g fill="#777"><circle cx="81.500" cy="110.500" r="2.400"/><path d="M78 113.500l4-.3l2.200 3.400l3.600.5v1.500l-4.600-.2l-1.300-1.400l-.6 3.500l2.600 3.600l.6 5.400h-2.400l-.8-4.600l-2.600-2.600l-1.300 3.600l-2.300 3.800h-2.600l3-5l.8-6.400l.3-1.700l-2 1.300l-.8 2.800h-1.700l.9-4z"/></g>
<path d="M113 108.7l.9 9.400l2.100-2.900l3.900-.2z" fill="url(#curg)"/>
<path d="M119.5 118.5L124.5 114.5L126 114.5L128 116.5L130 114.5L131.5 114.5L136.5 118.5L134.5 122L132.3 120.8L132.3 129.5L123.7 129.5L123.7 120.8L121.5 122Z" fill="#555"/>
<path d="M122 116.500q5 1 7.500 6t6 5" stroke="#eee" stroke-width="1" fill="none"/><circle cx="122" cy="116.500" r="1.300" fill="#eee"/><circle cx="135.500" cy="127.500" r="1.300" fill="#eee"/>
<path d="M150.5 116.3L156.38 111.5L158.15 111.5L160.5 113.9L162.85 111.5L164.62 111.5L170.5 116.3L168.15 120.5L165.56 119.06L165.56 129.5L155.44 129.5L155.44 119.06L152.85 120.5Z" fill="#585858"/>
<path d="M153 114q6 1.500 9 7.500t6 6.500" stroke="#eee" stroke-width="1" fill="none"/><circle cx="153" cy="114" r="1.300" fill="#eee"/><circle cx="168" cy="128" r="1.300" fill="#eee"/>
<path d="M171.500 108l3.500 3l-6 6.500l-3.500 1l.6-3.600z" fill="#c8c8c8"/><path d="M170.300 109.200l3.400 3" stroke="#444" stroke-width=".8"/>
<path d="M200 108.7l.9 9.400l2.100-2.900l3.900-.2z" fill="url(#curg)"/>
<path d="M215.5 111h3l.4 2.500q3 .6 4.500 2.200q-2.200 3-2 5.500q.3 3 2.600 7.800h-14q2.300-4.800 2.600-7.800q.2-2.500-2-5.500q1.500-1.600 4.500-2.200z" fill="#5a5a5a"/>
<path d="M210.500 114q5 1 6.500 6.500t6.500 6.500" stroke="#eee" stroke-width="1" fill="none"/><circle cx="210.500" cy="114" r="1.300" fill="#eee"/><circle cx="223.500" cy="127" r="1.300" fill="#eee"/>
<path d="M247.0 110h3l.4 2.500q3 .6 4.500 2.200q-2.200 3-2 5.500q.3 3 2.600 7.800h-14q2.300-4.800 2.600-7.800q.2-2.500-2-5.500q1.500-1.600 4.500-2.200z" fill="#585858"/>
<path d="M242 112q5 1.500 7 7t8 7" stroke="#eee" stroke-width="1" fill="none"/><circle cx="242" cy="112" r="1.300" fill="#eee"/><circle cx="257.500" cy="126.500" r="1.300" fill="#eee"/>
<path d="M261.500 107.500l2 2l-7.500 8l-3 1l1-3z" fill="#c4c4c4"/>
<path d="M259 129.5h4.500v-4.500z" fill="#5a5a5a"/>
<path d="M421.5 76v22M423.5 76v22" stroke="#151515" stroke-width="1"/>
<path d="M422.5 76v22M420.5 76v22M424.5 76v22" stroke="#2c2c2c" stroke-width="1"/>
<path d="M656.5 76v22M658.5 76v22" stroke="#151515" stroke-width="1"/>
<path d="M657.5 76v22M655.5 76v22M659.5 76v22" stroke="#2c2c2c" stroke-width="1"/>
<path d="M706.5 76v22M708.5 76v22" stroke="#151515" stroke-width="1"/>
<path d="M707.5 76v22M705.5 76v22M709.5 76v22" stroke="#2c2c2c" stroke-width="1"/>
<path d="M756.5 76v22M758.5 76v22" stroke="#151515" stroke-width="1"/>
<path d="M757.5 76v22M755.5 76v22M759.5 76v22" stroke="#2c2c2c" stroke-width="1"/>
<path d="M775.9 84.8l2.200 5.100l-2.200 5.100M779.0 84.8l2.200 5.100l-2.200 5.100" stroke="#343434" stroke-width="1.100" fill="none"/>
<path d="M774.9 84.8l2.200 5.100l-2.200 5.100M778.0 84.8l2.200 5.100l-2.200 5.100" stroke="#131313" stroke-width="1.200" fill="none"/>
<rect x="430.5" y="73.5" width="30" height="26" rx="1.5" fill="#1b1b1b" stroke="#343434"/>
<path d="M433.5 77.2l.8 8.4l2-2.6l3.600-.3z" fill="none" stroke="#8a8a8a" stroke-width=".9"/>
<path d="M441.200 95.600h14.700v-12.800z" fill="url(#org)"/>
<path d="M470 76.7l.9 9.400l2.100-2.900l3.900-.2z" fill="url(#curg)"/>
<path d="M488 82.800L475.400 94H488z" fill="none" stroke="#777" stroke-width="1.100"/><circle cx="488" cy="82.800" r="1.600" fill="#e4e4e4"/><circle cx="475.400" cy="94" r="1.600" fill="#e4e4e4"/><circle cx="488" cy="94" r="1.600" fill="#e4e4e4"/>
<path d="M492.5 97.5h4.500v-4.500z" fill="#5a5a5a"/>
<path d="M507 76.7l.9 9.400l2.100-2.900l3.900-.2z" fill="url(#curg)"/>
<path d="M518 87.500h13.500v9.500h-13.500z" fill="url(#gry)"/><path d="M520.600 80.500l1.600-3l11.400 6.200l-1.400 3.300z" fill="#5c5c5c"/><path d="M520.600 81.500l-2.900 6.800" stroke="#bbb" stroke-width="1"/><circle cx="520.600" cy="81.500" r="1.500" fill="#e4e4e4"/><circle cx="517.700" cy="88.300" r="1.500" fill="#e4e4e4"/>
<path d="M547 79.200h9.500q2.500 6.500 10.500 7v8.400h-20z" fill="url(#gry)"/>
<path d="M566.5 98.5h4.500v-4.500z" fill="#5a5a5a"/>
<rect x="583" y="78" width="22" height="18.300" fill="#6c6c6c"/><path d="M586.500 81.500h7.500q2 4.500 8 5v6h-15.500z" fill="#7a7a7a" stroke="#b4b4b4" stroke-width="1.200"/>
<path d="M603.5 98.5h4.500v-4.500z" fill="#5a5a5a"/>
<rect x="619.200" y="78.300" width="13.800" height="17.300" fill="#484848"/><path d="M622.500 85.500h7.500v5l-3.700 3.500l-3.800-3.500z" fill="#2a2a2a" stroke="#ddd" stroke-width="1"/><path d="M631 77h12.200v7.500l-6.100 5.500l-6.100-5.500z" fill="url(#gry)"/>
<path d="M670 78.500l6 2.500v14.500l-6-3zM679 78.500l5.500 2.500v14.500l-5.500-3zM687 78.500l5 2.500v14.500l-5-3z" fill="url(#pan)"/><path d="M676 81l3-2.500v14l-3 3zM684.500 81l2.500-2.500v14l-2.500 3z" fill="#8a8a8a"/>
<path d="M690.5 97.5h4.500v-4.500z" fill="#5a5a5a"/>
<g fill="#6e6e6e"><circle cx="731" cy="78.700" r="2.500"/><path d="M727.500 82.500h7l.5 9.500h-8z"/><path d="M727.500 83l-4.500 4l.8.900l4.200-2.600z"/><path d="M727.800 92.500h2.600v5h-2.600zM731.500 92.500h2.600v5h-2.600z"/></g><path d="M731 82.500h3.500l1 9h-4.500z" fill="#cfcfcf"/><path d="M736 80.500h3l.4 3l1.600 3v4.500h-5z" fill="#8e8e8e"/>
<path d="M421.5 108v22M423.5 108v22" stroke="#151515" stroke-width="1"/>
<path d="M422.5 108v22M420.5 108v22M424.5 108v22" stroke="#2c2c2c" stroke-width="1"/>
<path d="M582.5 108v22M584.5 108v22" stroke="#151515" stroke-width="1"/>
<path d="M583.5 108v22M581.5 108v22M585.5 108v22" stroke="#2c2c2c" stroke-width="1"/>
<path d="M632.5 108v22M634.5 108v22" stroke="#151515" stroke-width="1"/>
<path d="M633.5 108v22M631.5 108v22M635.5 108v22" stroke="#2c2c2c" stroke-width="1"/>
<path d="M682.5 108v22M684.5 108v22" stroke="#151515" stroke-width="1"/>
<path d="M683.5 108v22M681.5 108v22M685.5 108v22" stroke="#2c2c2c" stroke-width="1"/>
<path d="M762.5 108v22M764.5 108v22" stroke="#151515" stroke-width="1"/>
<path d="M763.5 108v22M761.5 108v22M765.5 108v22" stroke="#2c2c2c" stroke-width="1"/>
<path d="M750.9 116.8l2.200 5.100l-2.200 5.100M754.0 116.8l2.200 5.100l-2.200 5.100" stroke="#343434" stroke-width="1.100" fill="none"/>
<path d="M749.9 116.8l2.200 5.100l-2.200 5.100M753.0 116.8l2.200 5.100l-2.200 5.100" stroke="#131313" stroke-width="1.200" fill="none"/>
<path d="M775.9 116.8l2.200 5.100l-2.200 5.100M779.0 116.8l2.200 5.100l-2.200 5.100" stroke="#343434" stroke-width="1.100" fill="none"/>
<path d="M774.9 116.8l2.200 5.100l-2.200 5.100M778.0 116.8l2.200 5.100l-2.200 5.100" stroke="#131313" stroke-width="1.200" fill="none"/>
<path d="M433 108.7l.9 9.400l2.100-2.900l3.900-.2z" fill="url(#curg)"/>
<path d="M443.5 115h5.500v-2h1.300v2h4.200q2.500 0 2.500 2.500v10.500h-15v-2.600h9.300v-4.200h-4.300v1.600h-1.400v1.800h-.9v-1.800h-1.200z" fill="url(#sewl)"/>
<path d="M476.5 111.0h6.500v-2.500h1.300v2.500h3.700q2.500 0 2.500 2.500v9.500h-5v-7.500h-4v2h-1.300v2h-.9v-2h-1.300v-2h-1.500z" fill="url(#sewd)"/>
<path d="M472.8 126H484.7" stroke="#888" stroke-width="1.2"/>
<circle cx="472.8" cy="126" r="1.700" fill="#eee"/><circle cx="484.7" cy="126" r="1.700" fill="#eee"/>
<path d="M491.5 129.5h4.500v-4.500z" fill="#5a5a5a"/>
<path d="M513.5 111.0h6.500v-2.500h1.300v2.500h3.700q2.500 0 2.500 2.500v9.500h-5v-7.500h-4v2h-1.300v2h-.9v-2h-1.300v-2h-1.500z" fill="url(#sewd)"/>
<path d="M508.500 126q4-3 7.500 0t8 0" stroke="#999" stroke-width="1.300" fill="none"/><circle cx="516" cy="126" r="1.700" fill="#eee"/>
<path d="M528.5 129.5h4.500v-4.500z" fill="#5a5a5a"/>
<circle cx="547.600" cy="111.800" r="2.700" fill="none" stroke="#7c7c7c" stroke-width="1.100"/><path d="M549.500 114l2.600 4.300" stroke="#7c7c7c" stroke-width="1.500"/>
<path d="M555.5 115h5.500v-2h1.300v2h4.200q2.500 0 2.500 2.500v10.500h-15v-2.600h9.300v-4.200h-4.300v1.600h-1.400v1.800h-.9v-1.800h-1.200z" fill="url(#sewl)"/>
<path d="M601 113h9q4 0 5.500 5l1.700 6h-20.400q1.500-6 11-7.500h-5.800z" fill="#7a7a7a"/><path d="M596 125h22.500l.8 1.800h-24zM594.500 128h25l.8 1.300h-26.600z" fill="#4e4e4e"/><circle cx="613.800" cy="119" r=".9" fill="#222"/>
<path d="M644 108.7l.9 9.400l2.100-2.900l3.900-.2z" fill="url(#curg)"/>
<path d="M651.5 118.15L656.59 114.2L658.11 114.2L660.15 116.17L662.19 114.2L663.71 114.2L668.8 118.15L666.76 121.6L664.53 120.42L664.53 129L655.77 129L655.77 120.42L653.54 121.6Z" fill="#787878"/>
<path d="M657.300 114.300q2.900 3.400 5.800 0" stroke="#e8e8e8" stroke-width="1.500" fill="none"/>
<path d="M694 108.7l.9 9.400l2.100-2.900l3.900-.2z" fill="url(#curg)"/>
<path d="M704 114.500h7v11h-7z" fill="#2a2a2a"/><path d="M704 114.500h2.300v2.700h-2.300zM708.600 114.500h2.300v2.700h-2.300zM706.300 117.200h2.300v2.700h-2.300zM704 119.900h2.300v2.700h-2.300zM708.600 119.900h2.300v2.700h-2.300zM706.300 122.600h2.300v2.700h-2.300z" fill="#bdbdbd"/><path d="M711 113.500q3-2.500 7.500-.8l-1 12q-.4 3-3.500 3.300l-8.500-.3q3.500-.5 4.500-3z" fill="url(#pan)"/><path d="M705 125.500q4 3.500 11 1.500" stroke="#ddd" stroke-width="1" fill="none"/>
</svg>
<!-- STATUS BAR -->
<div class="hline" style="left:791px;top:655px;width:299px;background:#0c0c0c"></div>
<div id="status"></div>
<div class="abs" style="left:29px;top:663px;font-size:9.850px;line-height:12px;color:#525252;white-space:nowrap">Version: 6.0.351 (r32317)</div>

<svg class="abs" id="miscsvg" style="left:0;top:0;pointer-events:none" width="1092" height="683" viewBox="0 0 1092 683">
<defs>
<linearGradient id="cloud" x1="0" y1="0" x2="0" y2="1"><stop offset="0" stop-color="#ffd21a"/><stop offset="1" stop-color="#f59800"/></linearGradient>
<linearGradient id="chevg" x1="0" y1="0" x2="0" y2="1"><stop offset="0" stop-color="#ffe100"/><stop offset="1" stop-color="#f59a00"/></linearGradient>
<linearGradient id="simbg" x1="0" y1="0" x2="0" y2="1"><stop offset="0" stop-color="#272727"/><stop offset="1" stop-color="#1b1b1b"/></linearGradient>
<linearGradient id="lg" x1="0" y1="0" x2="0" y2="1"><stop offset="0" stop-color="#d0d0d0"/><stop offset="1" stop-color="#9a9a9a"/></linearGradient>
<linearGradient id="wht" x1="0" y1="0" x2="1" y2="1"><stop offset="0" stop-color="#ffffff"/><stop offset="1" stop-color="#b0b0b0"/></linearGradient>
<linearGradient id="orc" x1="0" y1="0" x2="1" y2="1"><stop offset="0" stop-color="#ffb400"/><stop offset="1" stop-color="#f57c00"/></linearGradient>
<linearGradient id="dkc" x1="0" y1="0" x2="1" y2="0"><stop offset="0" stop-color="#4a4a4a"/><stop offset="0.6" stop-color="#bdbdbd"/><stop offset="1" stop-color="#5a5a5a"/></linearGradient>
</defs>
<path d="M532.500 35l3 3l-3 3M536.500 35l3 3l-3 3" stroke="#353535" stroke-width="1.200" fill="none"/>
<path d="M628.5 26v11.500" stroke="#3c3c3c" stroke-width="1"/>
<path d="M687.5 26v11.500" stroke="#3c3c3c" stroke-width="1"/>
<path d="M719.5 26v11.500" stroke="#3c3c3c" stroke-width="1"/>
<path d="M772.5 26v11.500" stroke="#3c3c3c" stroke-width="1"/>
<path d="M823.5 26v11.500" stroke="#3c3c3c" stroke-width="1"/>
<rect x="641.500" y="19.500" width="31" height="25" rx="4" fill="#151515" stroke="#0c0c0c"/>
<path d="M651.500 39q-4.800 0-4.800-4.200q0-3.300 3.400-4q.3-3.300 3.300-3.900q1.700-3.900 5.600-3.900q4.500 0 5.500 4.500q3 .9 3 4.500q0 3.400-3.700 4.600q-1.500 2.400-6.300 2.400z" fill="url(#cloud)"/>
<path d="M660 29.200q-1.300-1-3-1q-3.300 0-3.300 3.600t3.300 3.600q1.700 0 3-1" stroke="#2a1a00" stroke-width="2" fill="none"/>
<path d="M694 31h3.500v9.500h-3.500zM698.300 31l9.700-4.500v18.500l-9.700-4.500z" fill="url(#lg)"/><path d="M710.500 29.500q4 6 0 12.500" stroke="#b0b0b0" stroke-width="1.600" fill="none"/>
<circle cx="745.800" cy="30.600" r="4.300" fill="url(#lg)"/><path d="M738 45.800q0-10 8-10t8 10z" fill="url(#lg)"/>
<circle cx="798" cy="35.700" r="10" fill="url(#lg)"/>
<text x="798" y="41.500" text-anchor="middle" font-family="Liberation Sans,sans-serif" font-weight="700" font-size="15.500" fill="#2a2a2a">?</text>
<path d="M830.0 35.2L834.9 31.5L836.4 31.5L838.3 33.3L840.3 31.5L841.8 31.5L846.7 35.2L844.7 38.4L842.5 37.3L842.5 45.3L834.1 45.3L834.1 37.3L832.0 38.4Z" fill="url(#lg)"/><path d="M844 30.500h5.500M846.700 27.800v5.500" stroke="#d8d8d8" stroke-width="1.300"/>
<rect x="866.500" y="15.500" width="128" height="33" rx="1.500" fill="url(#simbg)" stroke="#151515"/><path d="M973.500 16v32" stroke="#2e2e2e"/><path d="M972.500 16v32" stroke="#141414"/>
<path d="M880 27.500l6 4.500l6-4.500M880 33l6 4.500l6-4.500" stroke="url(#chevg)" stroke-width="2.300" fill="none"/>
<text x="901.500" y="36.600" font-family="Liberation Sans,sans-serif" font-weight="700" font-size="10" fill="#ececec" textLength="62" lengthAdjust="spacingAndGlyphs">SIMULATION</text>
<path d="M980.700 29.800h6.800l-3.400 4.200z" fill="#a8a8a8"/>
<rect x="1010.5" y="27.500" width="18" height="14.500" rx="2" fill="#1e1e1e" stroke="#3b3b3b"/>
<rect x="1033.5" y="27.500" width="18" height="14.500" rx="2" fill="#1e1e1e" stroke="#3b3b3b"/>
<rect x="1056.5" y="27.500" width="18" height="14.500" rx="2" fill="#1e1e1e" stroke="#3b3b3b"/>
<path d="M1015.700 35h8" stroke="#9a9a9a" stroke-width="1.800"/>
<rect x="1038.600" y="32" width="8.300" height="6.600" fill="none" stroke="#9a9a9a" stroke-width="1.100"/><path d="M1038 31.600h9.500" stroke="#9a9a9a" stroke-width="1.900"/>
<path d="M1061.700 32l7.400 6.200M1069.100 32l-7.400 6.200" stroke="#8c8c8c" stroke-width="1.500"/>
<path d="M403 57.0h-4.500v6.500h7.500v-3.500" fill="none" stroke="#8c8c8c" stroke-width="1.300"/><path d="M402.5 60.0l5-5M404 55.1h3.600v3.600" fill="none" stroke="#8c8c8c" stroke-width="1.300"/>
<path d="M773 57.0h-4.500v6.500h7.500v-3.500" fill="none" stroke="#8c8c8c" stroke-width="1.300"/><path d="M772.5 60.0l5-5M774 55.1h3.600v3.600" fill="none" stroke="#8c8c8c" stroke-width="1.300"/>
<path d="M1079 57.0h-4.500v6.500h7.500v-3.500" fill="none" stroke="#8c8c8c" stroke-width="1.300"/><path d="M1078.5 60.0l5-5M1080 55.1h3.600v3.600" fill="none" stroke="#8c8c8c" stroke-width="1.300"/>
<path d="M1079 363.0h-4.500v6.500h7.500v-3.500" fill="none" stroke="#8c8c8c" stroke-width="1.300"/><path d="M1078.5 366.0l5-5M1080 361.1h3.600v3.600" fill="none" stroke="#8c8c8c" stroke-width="1.300"/>
<path d="M791.5 58.7h3.500v-2.700l4 4.200l-4 4.200v-2.700h-3.500z" fill="#b0b0b0"/>
<path d="M791.5 363.7h3.500v-2.700l4 4.200l-4 4.200v-2.700h-3.500z" fill="#b0b0b0"/>
<path d="M802.500 54v13" stroke="#2e2e2e"/><path d="M802.500 359v13" stroke="#2e2e2e"/>
<rect x="955.500" y="663.500" width="18.500" height="13.500" fill="none" stroke="#7e7e7e" stroke-width="1.300"/><path d="M964.800 663.500v13.500" stroke="#7e7e7e" stroke-width="1.300"/>
<rect x="986.5" y="663.500" width="18.500" height="13.500" fill="none" stroke="#7e7e7e" stroke-width="1.600"/><text x="995.75" y="674" text-anchor="middle" font-family="Liberation Sans,sans-serif" font-weight="700" font-size="9.500" fill="#8a8a8a">3D</text>
<rect x="1017.5" y="663.500" width="18.500" height="13.500" fill="none" stroke="#7e7e7e" stroke-width="1.600"/><text x="1026.75" y="674" text-anchor="middle" font-family="Liberation Sans,sans-serif" font-weight="700" font-size="9.500" fill="#8a8a8a">2D</text>
<path d="M1048.500 664.500v12" stroke="#3a3a3a"/>
<rect x="1058.500" y="662.500" width="17" height="15" rx="1.500" fill="#2e2e30" stroke="#202020"/>
<path d="M1070.300 672.200a3.600 3.600 0 1 1-1.300-4.600" fill="none" stroke="#8c8c8c" stroke-width="1.600"/><path d="M1067.300 666.200h4.300v4.300z" fill="#8c8c8c"/>
<g fill="#3e3e3e"><path d="M971.500 118h7v8h-7z"/><path d="M973.500 116.500h7v8h-1v-7h-6z"/></g><path d="M972.500 120h5M972.500 122h5M972.500 124h5" stroke="#2b2b2b" stroke-width=".7"/>
<g fill="#3e3e3e"><path d="M1034.500 119h7.500v7h-7.500z"/><path d="M1043 116.500h1v1.200h1.200v1h-1.200v1.200h-1v-1.200h-1.200v-1h1.200z"/></g><path d="M1037 121h2.500v3h-2.500z" fill="#2b2b2b"/>
</svg>
<svg class="abs" id="btnsvg" style="left:0;top:0;pointer-events:none" width="1092" height="683" viewBox="0 0 1092 683">
<rect x="62.500" y="148.5" width="24" height="24" fill="#1d1d1f" stroke="#4c4c4c"/>
<rect x="62.500" y="186.5" width="24" height="24" fill="#1d1d1f" stroke="#4c4c4c"/>
<rect x="62.500" y="215.5" width="24" height="24" fill="#1d1d1f" stroke="#4c4c4c"/>
<rect x="62.500" y="244.5" width="24" height="24" fill="#1d1d1f" stroke="#4c4c4c"/>
<rect x="62.500" y="273.5" width="24" height="24" fill="#1d1d1f" stroke="#787878"/>
<rect x="62.500" y="302.5" width="24" height="24" fill="#1d1d1f" stroke="#4c4c4c"/>
<rect x="62.500" y="331.5" width="24" height="24" fill="#1d1d1f" stroke="#787878"/>
<rect x="62.500" y="360.5" width="24" height="24" fill="#1d1d1f" stroke="#4c4c4c"/>
<path d="M66.500 158l7.500-5l8.500 2.500v9.500l-7.500 4l-8.500-2z" fill="#9a9a9a"/><path d="M66.500 158l7.500-5l8.500 2.500l-7.500 4z" fill="#d4d4d4"/><path d="M75 159.500l7.500-4v9.500l-7.500 4z" fill="#6a6a6a"/><path d="M76 169.500l8-4.500v4.500z" fill="#0c0c0c"/>
<rect x="64.500" y="164.500" width="9" height="6.500" fill="#8e8e8e" stroke="#cfcfcf" stroke-width=".8"/><path d="M66.500 164.500l-1 2.500M69.500 164.500l-1 2.500M72.500 164.500l-1 2.500" stroke="#222" stroke-width=".9"/>
<path d="M65.5 195.0L71.1 190.5L72.8 190.5L75.0 192.5L77.3 190.5L78.9 190.5L84.5 195.0L82.3 198.9L79.8 197.6L79.8 207.3L70.2 207.3L70.2 197.6L67.7 198.9Z" fill="url(#wht)"/>
<path d="M63.5 206.0q4-4.200 8 0q-4 3.800-8 0z" fill="#f4f4f4" stroke="#111" stroke-width=".9"/><circle cx="67.5" cy="205.9" r="1.600" fill="#111"/>
<ellipse cx="79.0" cy="220.5" rx="2.1" ry="1.78" fill="#ffb000" stroke="#f58a00" stroke-width=".5"/>
<ellipse cx="82.5" cy="225.5" rx="2.7" ry="2.29" fill="#ffb000" stroke="#f58a00" stroke-width=".5"/>
<ellipse cx="78.5" cy="230.5" rx="2.8" ry="2.38" fill="#ffb000" stroke="#f58a00" stroke-width=".5"/>
<ellipse cx="73.0" cy="220.5" rx="1.6" ry="1.36" fill="#ffb000" stroke="#f58a00" stroke-width=".5"/>
<ellipse cx="69.5" cy="224" rx="1.4" ry="1.19" fill="#ffb000" stroke="#f58a00" stroke-width=".5"/>
<ellipse cx="68.5" cy="228" rx="1.3" ry="1.10" fill="#ffb000" stroke="#f58a00" stroke-width=".5"/>
<ellipse cx="69.0" cy="231.5" rx="1.2" ry="1.02" fill="#ffb000" stroke="#f58a00" stroke-width=".5"/>
<circle cx="67.800" cy="235.500" r="1.900" fill="#f59000"/>
<circle cx="75.800" cy="252.500" r="4.600" fill="url(#wht)"/><path d="M67 267.500q0-6.500 6.500-8v-3h4.600v3q6.500 1.500 6.500 8z" fill="url(#wht)"/>
<path d="M63.5 264.5q4-4.200 8 0q-4 3.800-8 0z" fill="#f4f4f4" stroke="#111" stroke-width=".9"/><circle cx="67.5" cy="264.4" r="1.600" fill="#111"/>
<path d="M66 281.500l6 1v11.500l-5.500-1z" fill="#e8e8e8"/><path d="M71 279q5-2.500 11-.5l-1.500 12.500q-5-1.500-10.500 1.500z" fill="url(#orc)"/><path d="M67 293q4 3 13.500-1.500l-.2-1.500q-5-1.500-10.300 1.500z" fill="#e0e0e0"/>
<path d="M82.5 297.5h4v-4z" fill="#8a8a8a"/>
<path d="M66 311l5 1.500v9l-4.500-1z" fill="#3c3c3c"/><path d="M70.500 308.500q5-2.500 11-.5l-1.500 12q-5-1.500-10.500 1.500z" fill="url(#dkc)"/><path d="M67.500 321.500q4 3 12.500-1.500v-1q-5-1-10.500 2z" fill="#2a2a2a"/>
<path d="M70 342q0-7 5.600-7t5.600 7q0 3.500-2.400 5.500v2.500q4.500.8 5.500 4.500h-18q1-3.700 5.700-4.500v-2.500q-2-2-2-5.500z" fill="#f6b98e"/><path d="M66.500 354.500h18v1h-18z" fill="#e89a6a"/>
<path d="M82.5 355.5h4v-4z" fill="#8a8a8a"/>
<g fill="none" stroke="#f59a00" stroke-width="1.100"><circle cx="75.500" cy="371.500" r="7.500"/><ellipse cx="75.500" cy="371.500" rx="3.600" ry="7.500"/><path d="M75.500 364v15M68 371.500h15M69 367.500h13M69 375.500h13"/></g>
<path d="M63.5 380.5q4-4.200 8 0q-4 3.800-8 0z" fill="#f4f4f4" stroke="#111" stroke-width=".9"/><circle cx="67.5" cy="380.4" r="1.600" fill="#111"/>
<rect x="432" y="148" width="25" height="25" rx="1.500" fill="#d0d0d0" stroke="#a6a6a6"/>
<rect x="433" y="149" width="23" height="23" rx="1" fill="none" stroke="#dedede" stroke-width=".8"/>
<rect x="432" y="177" width="25" height="25" rx="1.500" fill="#d0d0d0" stroke="#a6a6a6"/>
<rect x="433" y="178" width="23" height="23" rx="1" fill="none" stroke="#dedede" stroke-width=".8"/>
<rect x="432" y="206" width="25" height="25" rx="1.500" fill="#d0d0d0" stroke="#a6a6a6"/>
<rect x="433" y="207" width="23" height="23" rx="1" fill="none" stroke="#dedede" stroke-width=".8"/>
<rect x="432" y="235" width="25" height="25" rx="1.500" fill="#d0d0d0" stroke="#7e7e7e"/>
<rect x="433" y="236" width="23" height="23" rx="1" fill="none" stroke="#dedede" stroke-width=".8"/>
<rect x="432" y="264" width="25" height="25" rx="1.500" fill="#d0d0d0" stroke="#a6a6a6"/>
<rect x="433" y="265" width="23" height="23" rx="1" fill="none" stroke="#dedede" stroke-width=".8"/>
<path d="M438 153l16.500 14" stroke="#1a1a1a" stroke-width="2.100" stroke-linecap="round"/><path d="M438.500 153.200l2 1.700" stroke="#e8e8e8" stroke-width=".7"/><path d="M439.500 152.500q-4 5-4.500 12" stroke="#f59000" stroke-width="1" fill="none"/>
<path d="M434 168.0q4-4.200 8 0q-4 3.800-8 0z" fill="#f4f4f4" stroke="#111" stroke-width=".9"/><circle cx="438" cy="167.9" r="1.600" fill="#111"/>
<path d="M436.0 185.5L441.6 181.0L443.3 181.0L445.5 183.0L447.8 181.0L449.4 181.0L455.0 185.5L452.8 189.4L450.3 188.1L450.3 197.8L440.7 197.8L440.7 188.1L438.2 189.4Z" fill="#fafafa"/>
<path d="M434 197.0q4-4.200 8 0q-4 3.800-8 0z" fill="#f4f4f4" stroke="#111" stroke-width=".9"/><circle cx="438" cy="196.9" r="1.600" fill="#111"/>
<circle cx="445.500" cy="217.500" r="7.800" fill="#2e2e2e"/><text x="446" y="223" text-anchor="middle" font-family="Liberation Serif,serif" font-style="italic" font-weight="700" font-size="14.500" fill="#ffa400">i</text>
<path d="M434 226.0q4-4.200 8 0q-4 3.800-8 0z" fill="#f4f4f4" stroke="#111" stroke-width=".9"/><circle cx="438" cy="225.9" r="1.600" fill="#111"/>
<path d="M435.500 245l5.500-.5v12l-4 .5z" fill="#f0f0f0"/><path d="M440.500 241.500q5.500-2.500 12-.5l-2.500 13.500q-5-1.500-11 1z" fill="url(#orc)"/><path d="M437.500 256.500q5 3.500 12.500-1l0-1q-5-1.500-11 1z" fill="#e8e8e8"/>
<path d="M436.0 272.5L441.6 268.0L443.3 268.0L445.5 270.0L447.8 268.0L449.4 268.0L455.0 272.5L452.8 276.4L450.3 275.1L450.3 284.8L440.7 284.8L440.7 275.1L438.2 276.4Z" fill="#f2f2f2"/>
<rect x="435" y="279.500" width="6.500" height="6.500" fill="#7e7e7e"/><path d="M436.300 279.500v-2q2-2.500 3.900 0v2" fill="none" stroke="#7e7e7e" stroke-width="1.200"/><rect x="437.700" y="281.500" width="1.200" height="2.500" fill="#ddd"/>
</svg>
</body>
</html>
